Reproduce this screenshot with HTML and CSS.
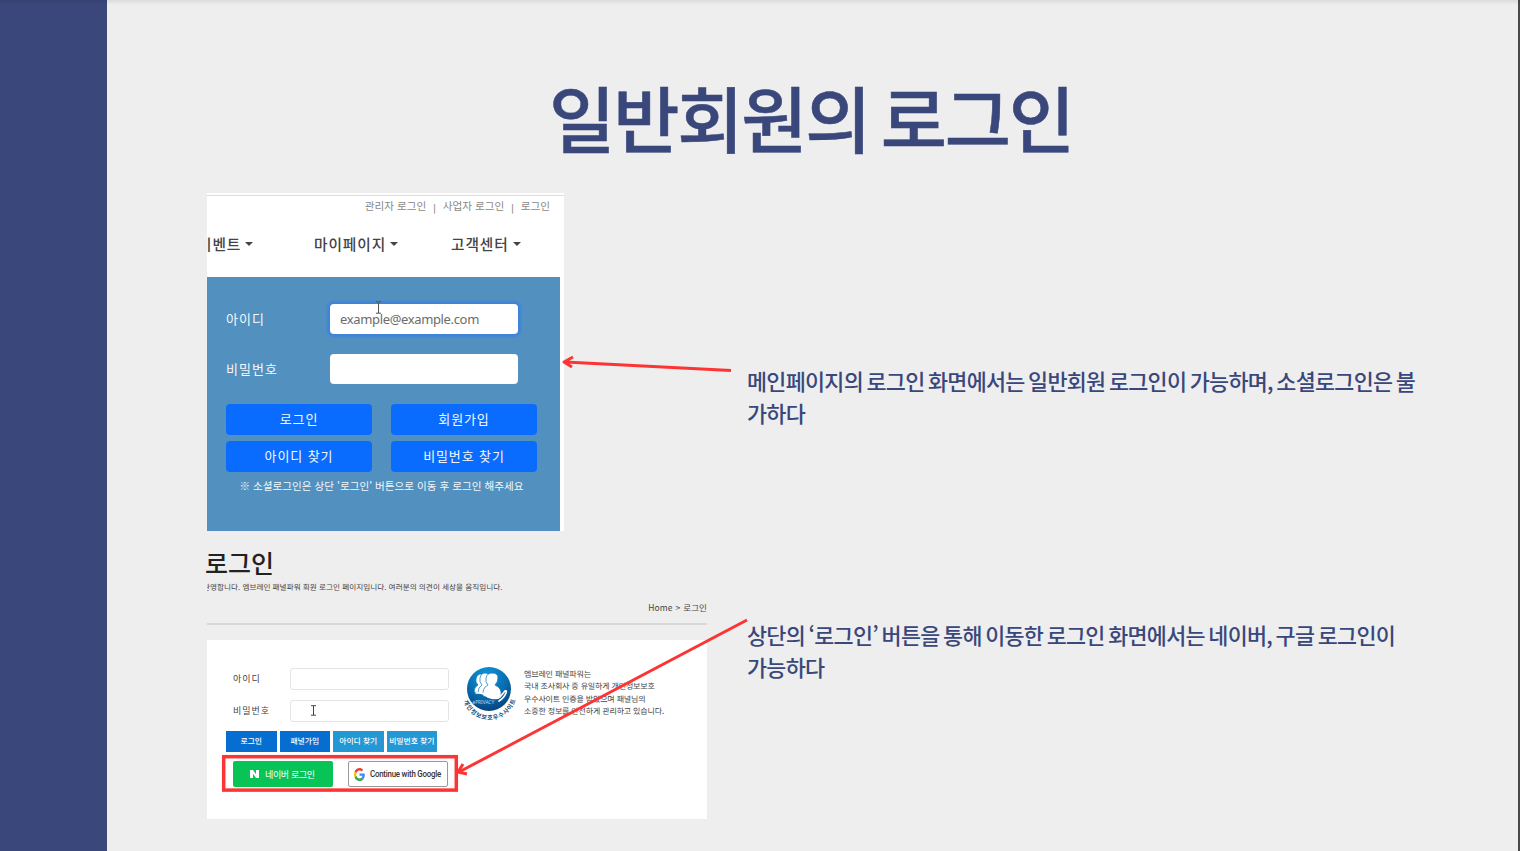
FILE: index.html
```html
<!DOCTYPE html>
<html lang="ko">
<head>
<meta charset="utf-8">
<title>일반회원의 로그인</title>
<link rel="stylesheet" href="styles.css">
</head>
<body>
<div class="slide">
  <div class="side"></div>
  <main class="main">
    <h1 class="title">일반회원의 로그인</h1>
    <section class="row row-first">
      <div class="shot-main">
        <div class="top-links"><span>관리자 로그인</span><b>|</b><span>사업자 로그인</span><b>|</b><span>로그인</span></div>
        <nav class="menu">
          <span class="menu-cut"><span>이벤트</span><i class="caret"></i></span>
          <span class="menu-my"><span>마이페이지</span><i class="caret"></i></span>
          <span class="menu-help"><span>고객센터</span><i class="caret"></i></span>
        </nav>
        <div class="login">
          <div class="field"><label>아이디</label><div class="input focus">example@example.com
            <svg class="ibeam" width="7" height="13" viewBox="0 0 7 13"><path d="M1 .7h2l.5.6.5-.6h2M3.5 1v11M1 12.2h5" fill="none" stroke="#555"/></svg></div></div>
          <div class="field"><label>비밀번호</label><div class="input"></div></div>
          <div class="buttons"><span>로그인</span><span>회원가입</span><span>아이디 찾기</span><span>비밀번호 찾기</span></div>
          <p class="note">※ 소셜로그인은 상단 '로그인' 버튼으로 이동 후 로그인 해주세요</p>
        </div>
      </div>
      <p class="desc desc-first">메인페이지의 로그인 화면에서는 일반회원 로그인이 가능하며, 소셜로그인은 불<br>가하다</p>
    </section>
    <section class="row row-second">
      <div class="shot-login">
        <h2 class="page-title">로그인</h2>
        <p class="page-sub"><span>환영합니다. 엠브레인 패널파워 회원 로그인 페이지입니다. 여러분의 의견이 세상을 움직입니다.</span></p>
        <p class="crumb">Home &gt; 로그인</p>
        <div class="card">
          <div class="form">
            <div class="line"><label>아이디</label><div class="box"></div></div>
            <div class="line"><label>비밀번호</label><div class="box"><svg width="7" height="11" viewBox="0 0 7 11"><path d="M1 .7h5M3.5 1v9M1 10.2h5" fill="none" stroke="#444"/></svg></div></div>
            <div class="tabs"><span>로그인</span><span>패널가입</span><span class="light">아이디 찾기</span><span class="light">비밀번호 찾기</span></div>
            <div class="social">
              <span class="naver"><svg width="9" height="8" viewBox="0 0 9 8"><path d="M0 0h3l3 4.2V0h3v8H6L3 3.8V8H0z" fill="#fff"/></svg><span>네이버 로그인</span></span>
              <span class="google"><svg width="11" height="13" viewBox="0 0 48 48" preserveAspectRatio="none"><path fill="#EA4335" d="M24 9.5c3.54 0 6.71 1.22 9.21 3.6l6.85-6.85C35.9 2.38 30.47 0 24 0 14.62 0 6.51 5.38 2.56 13.22l7.98 6.19C12.43 13.72 17.74 9.5 24 9.5z"/><path fill="#4285F4" d="M46.98 24.55c0-1.57-.15-3.09-.38-4.55H24v9.02h12.94c-.58 2.96-2.26 5.48-4.78 7.18l7.73 6c4.51-4.18 7.09-10.36 7.09-17.65z"/><path fill="#FBBC05" d="M10.53 28.59c-.48-1.45-.76-2.99-.76-4.59s.27-3.14.76-4.59l-7.98-6.19C.92 16.46 0 20.12 0 24c0 3.88.92 7.54 2.56 10.78l7.97-6.19z"/><path fill="#34A853" d="M24 48c6.48 0 11.93-2.13 15.89-5.81l-7.73-6c-2.15 1.45-4.92 2.3-8.16 2.3-6.26 0-11.57-4.22-13.47-9.91l-7.98 6.19C6.51 42.62 14.62 48 24 48z"/></svg><span>Continue with Google</span></span>
            </div>
          </div>
          <div class="privacy">
            <svg class="seal" width="60" height="58" viewBox="0 0 60 58">
              <defs><radialGradient id="sea" cx=".45" cy=".2" r=".85"><stop offset="0" stop-color="#0c98da"/><stop offset=".5" stop-color="#0871b4"/><stop offset="1" stop-color="#073f76"/></radialGradient>
              <path id="arc" d="M4.5 33A27 27 0 0 0 57 31"/></defs>
              <circle cx="30" cy="22" r="22" fill="url(#sea)"/>
              <g fill="#fff" stroke="#0871b4" stroke-width=".7">
                <path d="M15 25q0-5 4-7-3-3-2-6 1-5 5-5 5 0 5 5 0 3-2 5l4 10z"/>
                <path d="M19 26q0-6 4-8-3-3-2-7 1-5 5-5t5 5q0 4-2 6l5 11z"/>
                <path d="M24 29q-1-8 5-11-3-3-2-7 1-5 6-5 6 0 6 5 0 4-3 7 7 3 6 10-2 4-8 4z"/>
              </g>
              <path fill="none" stroke="#fff" stroke-width="1.7" stroke-linecap="round" d="M17 26q7-1 12 4 8 3 12 0l5-6q2-1 1 2-2 5-7 8"/>
              <text x="13.5" y="37" class="eprivacy">ePRIVACY</text>
              <text class="arc-text"><textPath href="#arc" startOffset="1">개인정보보호우수사이트</textPath></text>
            </svg>
            <p>엠브레인 패널파워는<br>국내 조사회사 중 유일하게 개인정보보호<br>우수사이트 인증을 받았으며 패널님의<br>소중한 정보를 안전하게 관리하고 있습니다.</p>
          </div>
        </div>
      </div>
      <p class="desc desc-second">상단의 ‘로그인’ 버튼을 통해 이동한 로그인 화면에서는 네이버, 구글 로그인이<br>가능하다</p>
    </section>
  </main>
  <svg class="marks" width="1520" height="851" viewBox="0 0 1520 851" fill="none" stroke="#fc3434" stroke-width="3">
    <path d="M731 370.5 565 362M573 357l-9 5 8 5" stroke-linejoin="round"/>
    <path d="M747 620 459 772M463 764l-5 8 9 2" stroke-linejoin="round"/>
    <rect x="223.7" y="756.7" width="232.6" height="33.4" stroke-width="3.5"/>
  </svg>
</div>
</body>
</html>
```
FILE: styles.css
```css
* { box-sizing: border-box; }
body { margin: 0; font-family: "Noto Sans CJK KR", "Noto Sans", sans-serif; }
h1, h2, p { margin: 0; font-weight: 400; }
.slide { position: relative; display: flex; width: 1520px; height: 851px; overflow: hidden; background: #eee; white-space: nowrap; }
.slide::before { content: ""; position: absolute; inset: 0 0 auto; height: 5px; background: linear-gradient(rgba(0,0,0,.08), transparent); }
.side { width: 107px; background: #39477b; }
.main { width: 1411px; box-sizing: content-box; border-right: 2px solid #48494b; }
.title { height: 193px; padding: 62px 3px 0 0; text-align: center; font-size: 72px; line-height: 108px; font-weight: 500; letter-spacing: -2.2px; word-spacing: -6.5px; color: #39477b; -webkit-text-stroke: .5px #39477b; }
.row { display: grid; grid-template-columns: 540px 1fr; padding-left: 100px; }
.row-first { height: 356px; }
.desc { color: #39477b; font-size: 21.8px; line-height: 32px; letter-spacing: -.72px; word-spacing: -1.9px; font-weight: 500; }
.desc-first { padding-top: 172px; }
.desc-second { padding-top: 70px; }

.shot-main { width: 357px; height: 338px; background: #fff; border-top: 2px solid #fff; box-shadow: inset 0 1px #ddd; overflow: hidden; }
.top-links { display: flex; justify-content: flex-end; gap: 7px; height: 24px; padding-right: 14px; font-size: 10.6px; line-height: 22px; color: #888; }
.top-links b { font-size: 8.5px; line-height: 24px; }
.menu { display: grid; grid-template-columns: 107px 137px 1fr; align-items: start; height: 58px; padding-top: 14px; font-size: 14.7px; line-height: 22px; font-weight: 500; letter-spacing: .9px; color: #444; }
.menu > span { display: flex; align-items: center; gap: 4px; }
.menu-cut { margin-left: -9px; }
.caret { border: 4px solid transparent; border-top-color: #444; border-bottom: 0; }
.login { width: 353px; height: 254px; padding: 27px 19px 0; background: #5290bf; color: #f4f8fb; }
.field { display: grid; grid-template-columns: 104px 188px; height: 50px; font-size: 13px; line-height: 29px; letter-spacing: 1px; }
.input { position: relative; height: 30px; padding-left: 10px; border-radius: 4px; background: #fff; color: #6c6c6c; font-family: "Noto Sans", sans-serif; font-size: 13px; letter-spacing: -.35px; line-height: 31px; }
.focus { box-shadow: 0 0 2px 3px #4084d9; }
.ibeam { position: absolute; left: 45px; top: -3px; }
.buttons { display: grid; grid-template-columns: 146px 146px; gap: 6px 19px; }
.buttons span { height: 31px; border-radius: 4px; background: #0a6cff; text-align: center; font-size: 13px; line-height: 30px; letter-spacing: .9px; }
.note { margin-left: -4px; padding-top: 6px; text-align: center; font-size: 10.6px; line-height: 16px; }

.shot-login { width: 500px; height: 270px; color: #444; }
.page-title { height: 30px; margin-left: -2px; font-size: 25px; line-height: 27px; font-weight: 500; color: #222; }
.page-sub { overflow: hidden; height: 16px; font-size: 7.6px; line-height: 17px; }
.page-sub span { margin-left: -4px; letter-spacing: .03px; }
.crumb { height: 30px; padding-top: 5px; border-bottom: 2px solid #d9d9d9; text-align: right; font-size: 8.5px; line-height: 15px; letter-spacing: .1px; word-spacing: .5px; }
.card { display: flex; height: 179px; margin-top: 15px; background: #fff; }
.form { width: 252px; padding: 28px 0 0 19px; }
.line { display: grid; grid-template-columns: 64px 159px; height: 32px; font-size: 9px; line-height: 22px; }
.line label { padding-left: 7px; letter-spacing: 1px; }
.box { height: 22px; border: 1px solid #e4e4e4; border-radius: 3px; line-height: 20px; }
.box svg { display: block; margin: 4px 0 0 19px; }
.tabs { display: flex; gap: 3px; margin-top: -1px; }
.tabs span { width: 50.5px; height: 21px; background: #066ed0; color: #fff; text-align: center; font-size: 7.8px; line-height: 22px; font-weight: 500; }
.tabs .light { background: #2497d5; }
.social { display: flex; gap: 15px; padding: 9px 0 0 7px; }
.naver, .google { display: flex; align-items: center; width: 100px; height: 26px; border-radius: 2px; }
.naver { gap: 6px; padding-left: 17px; background: #08c457; color: #fff; font-size: 9px; letter-spacing: -.35px; }
.google { gap: 5px; padding-left: 5px; border: 1px solid #999; color: #333; font: 500 9px Roboto, sans-serif; letter-spacing: -.25px; }
.google svg { flex: none; }
.google span { transform: scaleX(.875); transform-origin: left; }
.privacy { display: flex; padding-top: 27px; }
.privacy p { padding: 2px 0 0 5px; font-size: 8px; line-height: 12.4px; letter-spacing: -.16px; }
.privacy p, .tabs, .page-sub { text-rendering: geometricPrecision; }
.eprivacy { font: 4.8px "Noto Sans", sans-serif; fill: #b9dcf2; }
.arc-text { font-size: 6px; font-weight: 700; fill: #174b78; letter-spacing: .8px; }
.marks { position: absolute; inset: 0; }
```
